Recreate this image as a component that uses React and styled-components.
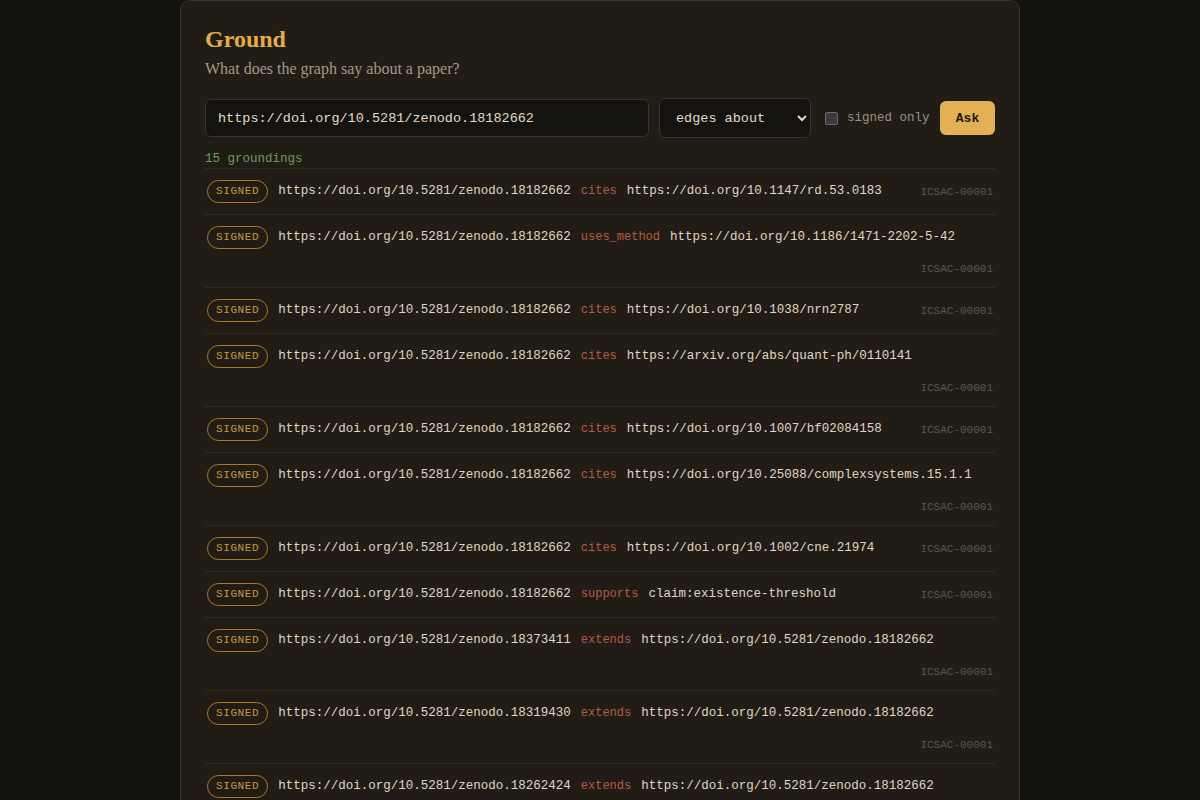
import React from 'react';
import styled, { createGlobalStyle } from 'styled-components';

const Global = createGlobalStyle`
  html, body {
    margin: 0;
    padding: 0;
    background: #13120f;
    color: #e4dac6;
  }
  * { box-sizing: border-box; }
`;

const mono = `"Liberation Mono", "DejaVu Sans Mono", monospace`;
const serif = `"Liberation Serif", "DejaVu Serif", serif`;

const Page = styled.div`
  min-height: 800px;
  display: flex;
  justify-content: center;
`;

const Card = styled.main`
  width: 840px;
  background: #211d16;
  border: 1px solid #3a3326;
  border-radius: 10px;
  padding: 24px 24px 0;
`;

const Title = styled.h1`
  font-family: ${serif};
  font-weight: 700;
  font-size: 24px;
  line-height: 29px;
  color: #e2ac4c;
  margin: 0 0 4px;
`;

const Subtitle = styled.p`
  font-family: ${serif};
  font-size: 16px;
  line-height: 22px;
  color: #a39a85;
  margin: 0 0 18px;
`;

const Form = styled.div`
  display: flex;
  align-items: center;
  gap: 10px;
`;

const UrlInput = styled.input`
  width: 444px;
  height: 38px;
  background: #15130f;
  border: 1px solid #3a3326;
  border-radius: 6px;
  color: #e4dac6;
  font-family: ${mono};
  font-size: 13.5px;
  padding: 0 12px;
  outline: none;
`;

const Select = styled.select`
  width: 152px;
  height: 40px;
  background: #15130f;
  border: 1px solid #3a3326;
  border-radius: 6px;
  color: #e4dac6;
  font-family: ${mono};
  font-size: 13.5px;
  padding: 0 12px;
  outline: none;
`;

const Check = styled.label`
  display: flex;
  align-items: center;
  gap: 9px;
  margin-left: 4px;
  font-family: ${mono};
  font-size: 12.5px;
  color: #9a917d;

  input {
    width: 13px;
    height: 13px;
    margin: 0;
    appearance: none;
    background: #3a3a3c;
    border: 1px solid #6a6a6c;
    border-radius: 2px;
  }
`;

const AskButton = styled.button`
  margin-left: auto;
  width: 55px;
  height: 34px;
  border: none;
  border-radius: 6px;
  background: #e3b055;
  color: #1d1810;
  font-family: ${mono};
  font-weight: 700;
  font-size: 13px;
`;

const Count = styled.div`
  margin-top: 13px;
  font-family: ${mono};
  font-size: 12.5px;
  line-height: 17px;
  color: #6f9a5b;
  border-bottom: 1px solid #302a1f;
`;

const List = styled.ul`
  list-style: none;
  margin: 0;
  padding: 0;
`;

const Row = styled.li`
  display: flex;
  flex-wrap: wrap;
  align-items: center;
  gap: 11px 10px;
  padding: 10px 2px;
  border-bottom: 1px solid #302a1f;
  font-family: ${mono};
  font-size: 12.5px;
  line-height: 25px;
  color: #e0d6c2;
`;

const Badge = styled.span`
  display: inline-block;
  height: 23px;
  line-height: 21px;
  padding: 0 8px;
  border: 1px solid #a87a2a;
  border-radius: 12px;
  color: #c9983c;
  font-size: 11px;
  letter-spacing: 0.6px;
`;

const Rel = styled.span`
  color: #b65b44;
  font-size: 12px;
`;

const Issuer = styled.span`
  margin-left: auto;
  color: #5d574a;
  font-size: 11px;
  line-height: 16px;
`;

const SRC = 'https://doi.org/10.5281/zenodo.18182662';

const rows = [
  [SRC, 'cites', 'https://doi.org/10.1147/rd.53.0183'],
  [SRC, 'uses_method', 'https://doi.org/10.1186/1471-2202-5-42'],
  [SRC, 'cites', 'https://doi.org/10.1038/nrn2787'],
  [SRC, 'cites', 'https://arxiv.org/abs/quant-ph/0110141'],
  [SRC, 'cites', 'https://doi.org/10.1007/bf02084158'],
  [SRC, 'cites', 'https://doi.org/10.25088/complexsystems.15.1.1'],
  [SRC, 'cites', 'https://doi.org/10.1002/cne.21974'],
  [SRC, 'supports', 'claim:existence-threshold'],
  ['https://doi.org/10.5281/zenodo.18373411', 'extends', SRC],
  ['https://doi.org/10.5281/zenodo.18319430', 'extends', SRC],
  ['https://doi.org/10.5281/zenodo.18262424', 'extends', SRC],
  ['https://doi.org/10.5281/zenodo.18262424', 'extends', SRC],
];

export default function App() {
  return (
    <Page>
      <Global />
      <Card>
        <Title>Ground</Title>
        <Subtitle>What does the graph say about a paper?</Subtitle>
        <Form>
          <UrlInput defaultValue={SRC} />
          <Select defaultValue="about">
            <option value="about">edges about</option>
            <option value="from">edges from</option>
          </Select>
          <Check>
            <input type="checkbox" />
            signed only
          </Check>
          <AskButton>Ask</AskButton>
        </Form>
        <Count>15 groundings</Count>
        <List>
          {rows.map(([from, rel, to], i) => (
            <Row key={i}>
              <Badge>SIGNED</Badge>
              <span>{from}</span>
              <Rel>{rel}</Rel>
              <span>{to}</span>
              <Issuer>ICSAC-00001</Issuer>
            </Row>
          ))}
        </List>
      </Card>
    </Page>
  );
}
